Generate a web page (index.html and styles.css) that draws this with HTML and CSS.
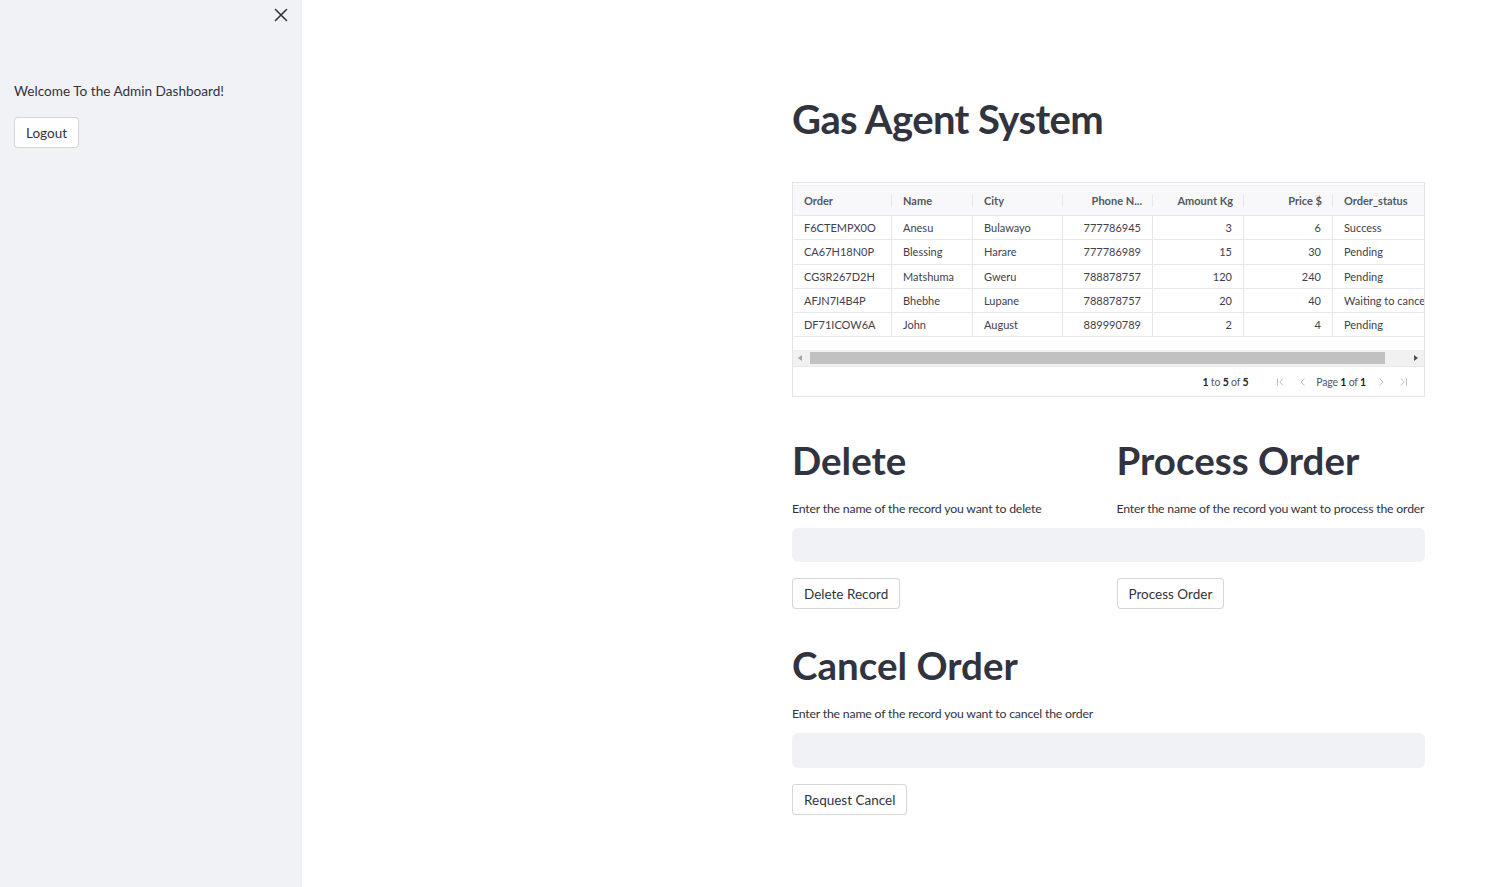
FILE: index.html
```html
<!DOCTYPE html>
<html>
<head>
<meta charset="utf-8">
<link rel="stylesheet" href="styles.css">
</head>
<body>
<div class="app">
  <aside class="sidebar">
    <div class="close-row">
      <svg class="close-icon" width="14" height="14" viewBox="0 0 14 14"><path d="M1.5 1.5 L12.5 12.5 M12.5 1.5 L1.5 12.5" stroke="#31333f" stroke-width="1.6" stroke-linecap="round"/></svg>
    </div>
    <p class="welcome">Welcome To the Admin Dashboard!</p>
    <button class="btn">Logout</button>
  </aside>
  <main class="main">
    <div class="content">
      <h1 class="title">Gas Agent System</h1>
      <div class="grid-wrap">
        <div class="grid-view">
          <div class="grid-row grid-head">
            <div class="cell">Order</div>
            <div class="cell">Name</div>
            <div class="cell">City</div>
            <div class="cell num">Phone N...</div>
            <div class="cell num">Amount Kg</div>
            <div class="cell num">Price $</div>
            <div class="cell last">Order_status</div>
          </div>
          <div class="grid-row">
            <div class="cell">F6CTEMPX0O</div><div class="cell">Anesu</div><div class="cell">Bulawayo</div><div class="cell num">777786945</div><div class="cell num">3</div><div class="cell num">6</div><div class="cell last">Success</div>
          </div>
          <div class="grid-row">
            <div class="cell">CA67H18N0P</div><div class="cell">Blessing</div><div class="cell">Harare</div><div class="cell num">777786989</div><div class="cell num">15</div><div class="cell num">30</div><div class="cell last">Pending</div>
          </div>
          <div class="grid-row">
            <div class="cell">CG3R267D2H</div><div class="cell">Matshuma</div><div class="cell">Gweru</div><div class="cell num">788878757</div><div class="cell num">120</div><div class="cell num">240</div><div class="cell last">Pending</div>
          </div>
          <div class="grid-row">
            <div class="cell">AFJN7I4B4P</div><div class="cell">Bhebhe</div><div class="cell">Lupane</div><div class="cell num">788878757</div><div class="cell num">20</div><div class="cell num">40</div><div class="cell last">Waiting to cancel</div>
          </div>
          <div class="grid-row">
            <div class="cell">DF71ICOW6A</div><div class="cell">John</div><div class="cell">August</div><div class="cell num">889990789</div><div class="cell num">2</div><div class="cell num">4</div><div class="cell last">Pending</div>
          </div>
        </div>
        <div class="grid-spacer"></div>
        <div class="hscroll">
          <span class="arrow left"></span>
          <div class="thumb"></div>
          <span class="arrow right"></span>
        </div>
        <div class="pager">
          <span class="pager-summary"><b>1</b> to <b>5</b> of <b>5</b></span>
          <span class="pager-icons">
            <svg width="10" height="10" viewBox="0 0 10 10"><path d="M1.5 1.5 V8.5 M7 1.5 L3.8 5 L7 8.5" fill="none" stroke="#b8bcc4" stroke-width="1"/></svg>
            <svg width="10" height="10" viewBox="0 0 10 10"><path d="M6.5 1.5 L3.2 5 L6.5 8.5" fill="none" stroke="#b8bcc4" stroke-width="1"/></svg>
          </span>
          <span class="pager-page">Page <b>1</b> of <b>1</b></span>
          <span class="pager-icons">
            <svg width="10" height="10" viewBox="0 0 10 10"><path d="M3.5 1.5 L6.8 5 L3.5 8.5" fill="none" stroke="#b8bcc4" stroke-width="1"/></svg>
            <svg width="10" height="10" viewBox="0 0 10 10"><path d="M3 1.5 L6.2 5 L3 8.5 M8.5 1.5 V8.5" fill="none" stroke="#b8bcc4" stroke-width="1"/></svg>
          </span>
        </div>
      </div>

      <div class="cols cols-top">
        <div class="col">
          <h2 class="heading">Delete</h2>
          <p class="label">Enter the name of the record you want to delete</p>
        </div>
        <div class="col">
          <h2 class="heading">Process Order</h2>
          <p class="label">Enter the name of the record you want to process the order</p>
        </div>
      </div>
      <div class="input"></div>
      <div class="cols">
        <div class="col"><button class="btn">Delete Record</button></div>
        <div class="col"><button class="btn">Process Order</button></div>
      </div>

      <h2 class="heading cancel-heading">Cancel Order</h2>
      <p class="label cancel-label">Enter the name of the record you want to cancel the order</p>
      <div class="input cancel-input"></div>
      <button class="btn">Request Cancel</button>
    </div>
  </main>
</div>
</body>
</html>
```

FILE: styles.css
```css
* { box-sizing: border-box; }
html, body { margin: 0; padding: 0; height: 100%; }
body {
  font-family: "Lato", "Liberation Sans", sans-serif;
  color: #31333f;
  background: #fff;
}
.app { display: flex; min-height: 887px; }

.sidebar {
  width: 302px;
  flex: none;
  background: #f0f2f6;
  padding: 8px 14px 0 14px;
}
.close-row { display: flex; justify-content: flex-end; height: 14px; }
.close-icon { display: block; margin-right: 0; }
.welcome {
  margin: 59px 0 0 0;
  font-size: 13.6px;
  line-height: 20px;
}

.btn {
  display: inline-flex;
  align-items: center;
  font-family: inherit;
  font-size: 13.5px;
  color: #31333f;
  background: #fff;
  border: 1px solid rgba(49, 51, 63, 0.2);
  border-radius: 4px;
  height: 31px;
  padding: 0 11px;
  margin: 0;
  cursor: pointer;
}
.sidebar .btn { margin-top: 16px; }

.main { flex: 1; padding: 93px 75px 0 490px; }
.content { width: 633px; }

.title {
  margin: 0;
  font-size: 40px;
  font-weight: 700;
  line-height: 52px;
  letter-spacing: -0.6px;
}

.grid-wrap {
  margin-top: 37px;
  border: 1px solid #e3e5ea;
  border-top-color: #dfe2e8;
  padding-top: 2px;
  font-size: 11px;
  color: #3f414b;
}
.grid-view { overflow: hidden; }
.grid-row {
  display: grid;
  grid-template-columns: 99px 81px 90px 90px 91px 89px 130px;
  height: 24.25px;
  border-bottom: 1px solid #e6e8ee;
  width: 770px;
}
.grid-head {
  height: 31px;
  background: #f8f8fa;
  font-weight: 700;
  color: #555762;
  border-top: 1px solid #eceef2;
}
.cell {
  padding: 0 11px;
  display: flex;
  align-items: center;
  white-space: nowrap;
  overflow: hidden;
  border-right: 1px solid #e6e8ee;
}
.cell.num { justify-content: flex-end; }
.grid-head .cell { border-right: none; position: relative; }
.grid-head .cell::after {
  content: "";
  position: absolute;
  right: 0;
  top: 9px;
  height: 12px;
  width: 1px;
  background: #e6e8ee;
}
.grid-head .cell.last::after { display: none; }
.grid-row .cell.last { border-right: none; }

.grid-spacer { height: 13px; }
.hscroll {
  height: 16px;
  background: #f1f1f1;
  position: relative;
}
.thumb {
  position: absolute;
  left: 17px;
  right: 39px;
  top: 2px;
  bottom: 2px;
  background: #c1c1c1;
}
.arrow {
  position: absolute;
  top: 4.5px;
  width: 0; height: 0;
  border-top: 3.5px solid transparent;
  border-bottom: 3.5px solid transparent;
}
.arrow.left { left: 5px; border-right: 4px solid #a3a3a3; }
.arrow.right { right: 6px; border-left: 4px solid #505050; }

.pager {
  height: 30px;
  border-top: 1px solid #e6e8ee;
  display: flex;
  align-items: center;
  justify-content: flex-end;
  padding-right: 16px;
  font-size: 10.5px;
  color: #555762;
  letter-spacing: -0.2px;
}
.pager b { color: #1e1f26; font-weight: 700; }
.pager-summary { margin-right: 28px; }
.pager-icons { display: inline-flex; gap: 12px; align-items: center; }
.pager-icons svg { display: block; }
.pager-page { margin: 0 10px 0 8px; }

.cols {
  display: grid;
  grid-template-columns: 1fr 1fr;
  gap: 16px;
}
.cols-top { margin-top: 41px; }
.heading {
  margin: 0;
  font-size: 38.5px;
  font-weight: 700;
  line-height: 44px;
  letter-spacing: 0;
}
.label {
  margin: 19px 0 0 0;
  font-size: 12.3px;
  line-height: 16px;
  letter-spacing: -0.2px;
}
.input {
  margin-top: 11px;
  height: 34px;
  background: #f0f2f6;
  border-radius: 6px;
}
.input + .cols { margin-top: 16px; }
.input + .btn { margin-top: 16px; }
.cancel-heading { margin-top: 34px; }
.cancel-label { margin-top: 19px; }
.cancel-input { height: 35px; }
```
